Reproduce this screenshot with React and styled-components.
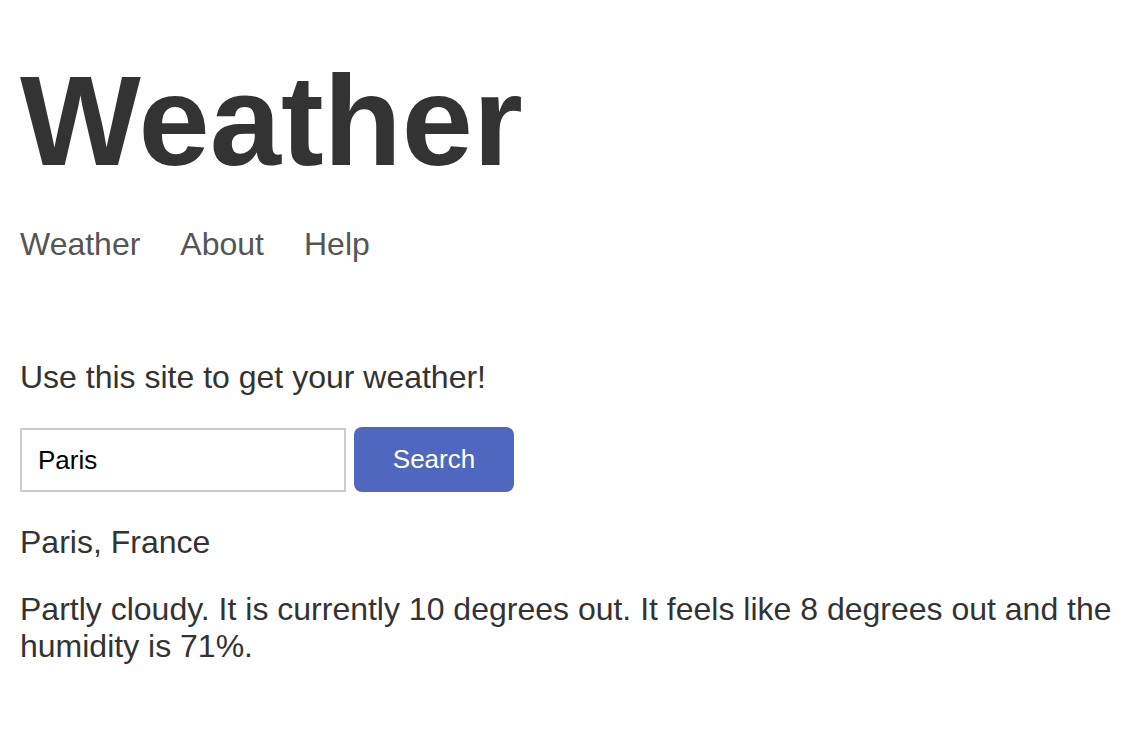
import { useState } from 'react';
import styled, { createGlobalStyle } from 'styled-components';

const GlobalStyle = createGlobalStyle`
	body {
		margin: 0;
		background: #ffffff;
		color: #333333;
		font-family: 'Liberation Sans', Arial, Helvetica, sans-serif;
	}
`;

const Page = styled.div`
	display: flex;
	flex-direction: column;
	padding: 47px 8px 0 20px;
	font-size: 32px;
`;

const Header = styled.header`
	margin-bottom: 96px;
`;

const Title = styled.h1`
	margin: 0 0 32px;
	font-size: 128px;
	font-weight: 700;
	color: #333333;
`;

const Nav = styled.nav`
	display: flex;
	gap: 40px;
`;

const NavLink = styled.a`
	color: #555555;
	text-decoration: none;
	cursor: pointer;
`;

const Text = styled.p`
	margin: 0 0 ${(p) => p.$gap ?? 32}px;
	color: #333333;
`;

const SearchForm = styled.form`
	display: flex;
	align-items: flex-end;
	gap: 8px;
	margin-bottom: 32px;
`;

const SearchInput = styled.input`
	box-sizing: border-box;
	width: 326px;
	height: 64px;
	padding: 0 16px;
	border: 2px solid #cccccc;
	border-radius: 0;
	font-family: inherit;
	font-size: 26px;
	color: #000000;
	outline: none;
`;

const SearchButton = styled.button`
	width: 160px;
	height: 65px;
	border: none;
	border-radius: 8px;
	background: #5067bf;
	color: #ffffff;
	font-family: inherit;
	font-size: 26px;
	cursor: pointer;
`;

const App = () => {
	const [city, setCity] = useState('Paris');

	const submitSearch = (e) => {
		e?.preventDefault();
	};

	return (
		<>
			<GlobalStyle />
			<Page>
				<Header>
					<Title>Weather</Title>
					<Nav>
						<NavLink>Weather</NavLink>
						<NavLink>About</NavLink>
						<NavLink>Help</NavLink>
					</Nav>
				</Header>
				<Text $gap={31}>Use this site to get your weather!</Text>
				<SearchForm onSubmit={submitSearch}>
					<SearchInput value={city} onChange={(e) => setCity(e.target.value)} />
					<SearchButton type='submit'>Search</SearchButton>
				</SearchForm>
				<Text $gap={30}>Paris, France</Text>
				<Text>
					Partly cloudy. It is currently 10 degrees out. It feels like 8 degrees out and the humidity is 71%.
				</Text>
			</Page>
		</>
	);
};

export default App;
